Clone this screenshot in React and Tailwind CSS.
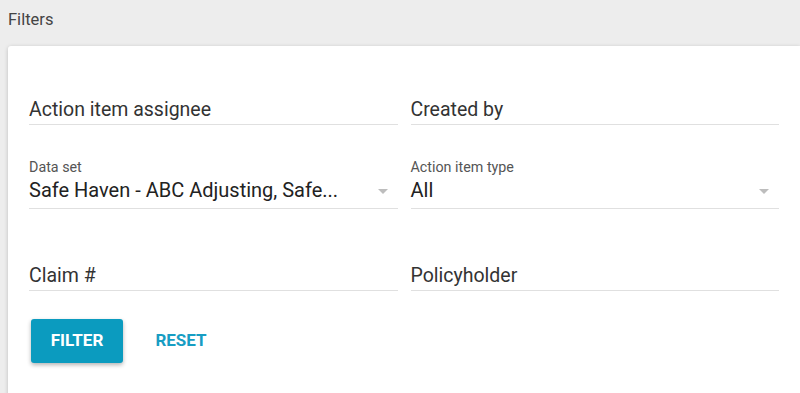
import React from 'react';

const font = { fontFamily: 'Roboto, "Liberation Sans", sans-serif' };

// Plain text input showing its placeholder label
const TextField = ({ label }) => (
    <div className="border-b border-[#e0e0e0] pb-[2px]">
        <div className="text-[19.5px] leading-[24px] text-[#333]">{label}</div>
    </div>
);

// Select with floating label above the value
const SelectField = ({ label, value }) => (
    <div className="border-b border-[#e0e0e0] pb-[6px]">
        <div className="text-[14.3px] leading-[16px] text-[#555]">{label}</div>
        <div className="mt-[3px] flex items-center justify-between pr-[10px]">
            <span className="text-[20px] leading-[24px] text-[#222]">{value}</span>
            <svg width="10" height="5" viewBox="0 0 10 5" className="mt-[2px]">
                <path d="M0 0 L10 0 L5 5 Z" fill="#bdbdbd" />
            </svg>
        </div>
    </div>
);

const App = () => {
    return (
        <div className="h-[393px] w-[800px] overflow-hidden bg-[#ededed]" style={font}>
            {/* Header */}
            <div className="pl-[8px] pt-[10px] text-[16.5px] leading-[20px] text-[#444]">Filters</div>

            {/* Card */}
            <div className="ml-[8px] mt-[16px] h-[400px] rounded-tl-[3px] bg-white px-[21px] pt-[52px] shadow-[0_1px_4px_rgba(0,0,0,0.2)]">
                <div className="grid grid-cols-2 gap-x-[13px]">
                    <TextField label="Action item assignee" />
                    <TextField label="Created by" />
                </div>

                <div className="mt-[34px] grid grid-cols-2 gap-x-[13px]">
                    <SelectField label="Data set" value="Safe Haven - ABC Adjusting, Safe..." />
                    <SelectField label="Action item type" value="All" />
                </div>

                <div className="mt-[55px] grid grid-cols-2 gap-x-[13px]">
                    <TextField label="Claim #" />
                    <TextField label="Policyholder" />
                </div>

                {/* Actions */}
                <div className="mt-[28px] flex items-center gap-[12px] pl-[2px]">
                    <button className="h-[44px] w-[92px] rounded-[3px] bg-[#0b9bbf] text-[17px] font-bold text-white shadow-[0_2px_4px_rgba(0,0,0,0.3)]">
                        FILTER
                    </button>
                    <button className="h-[44px] w-[92px] text-[17px] font-bold text-[#179dc3]">
                        RESET
                    </button>
                </div>
            </div>
        </div>
    );
};

export default App;
